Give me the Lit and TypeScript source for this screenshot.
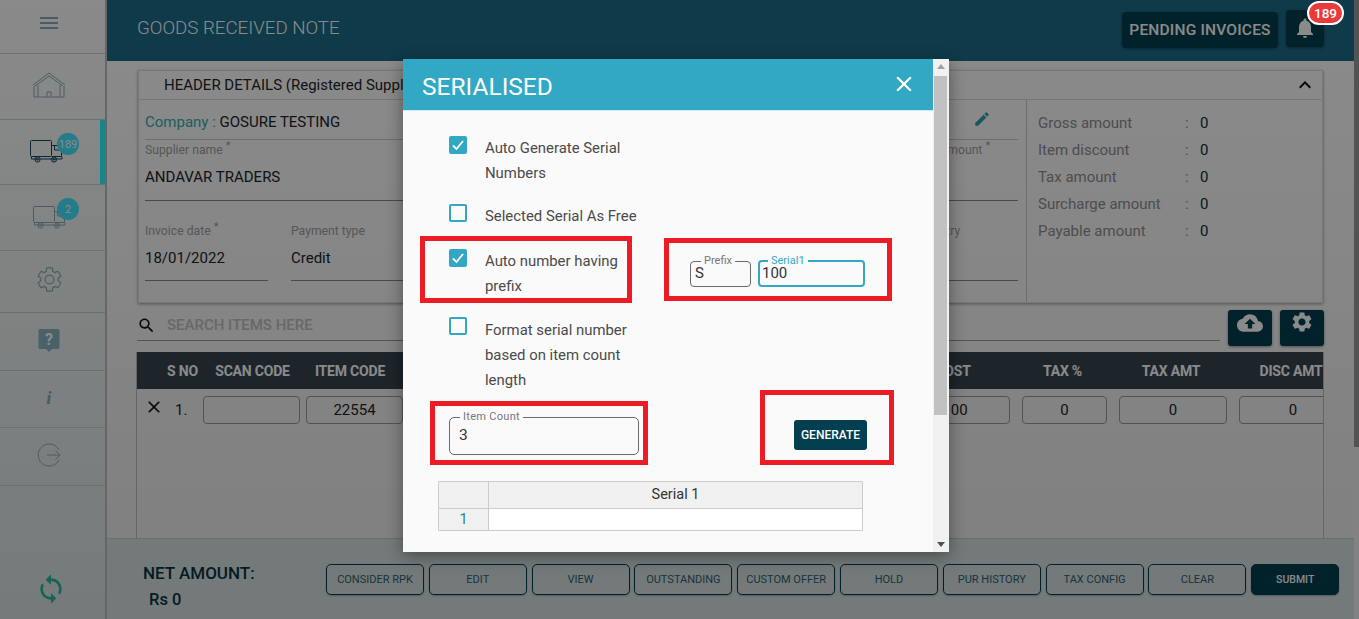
import { LitElement, html, css } from "lit";
import { customElement } from "lit/decorators.js";

const P = {
  menu: "M3 18h18v-2H3v2zm0-5h18v-2H3v2zm0-7v2h18V6H3z",
  search: "M15.5 14h-.79l-.28-.27C15.41 12.59 16 11.11 16 9.5 16 5.91 13.09 3 9.5 3S3 5.91 3 9.5 5.91 16 9.5 16c1.61 0 3.09-.59 4.23-1.57l.27.28v.79l5 4.99L20.49 19l-4.99-5zm-6 0C7.01 14 5 11.99 5 9.5S7.01 5 9.5 5 14 7.01 14 9.5 11.99 14 9.5 14z",
  close: "M19 6.41L17.59 5 12 10.59 6.41 5 5 6.41 10.59 12 5 17.59 6.41 19 12 13.41 17.59 19 19 17.59 13.41 12z",
  up: "M12 8l-6 6 1.41 1.41L12 10.83l4.59 4.58L18 14z",
  edit: "M3 17.25V21h3.75L17.81 9.94l-3.75-3.75L3 17.25zM20.71 7.04c.39-.39.39-1.02 0-1.41l-2.34-2.34c-.39-.39-1.02-.39-1.41 0l-1.83 1.83 3.75 3.75 1.83-1.83z",
  bell: "M12 22c1.1 0 2-.9 2-2h-4c0 1.1.89 2 2 2zm6-6v-5c0-3.07-1.64-5.64-4.5-6.32V4c0-.83-.67-1.5-1.5-1.5s-1.5.67-1.5 1.5v.68C7.63 5.36 6 7.92 6 11v5l-2 2v1h16v-1l-2-2z",
  cloud: "M19.35 10.04C18.67 6.59 15.64 4 12 4 9.11 4 6.6 5.64 5.35 8.04 2.34 8.36 0 10.91 0 14c0 3.31 2.69 6 6 6h13c2.76 0 5-2.24 5-5 0-2.64-2.05-4.78-4.65-4.96zM14 13v4h-4v-4H7l5-5 5 5h-3z",
  gear: "M19.14 12.94c.04-.3.06-.61.06-.94 0-.32-.02-.64-.07-.94l2.03-1.58c.18-.14.23-.41.12-.61l-1.92-3.32c-.12-.22-.37-.29-.59-.22l-2.39.96c-.5-.38-1.03-.7-1.62-.94l-.36-2.54c-.04-.24-.24-.41-.48-.41h-3.84c-.24 0-.43.17-.47.41l-.36 2.54c-.59.24-1.13.57-1.62.94l-2.39-.96c-.22-.08-.47 0-.59.22L2.74 8.87c-.12.21-.08.47.12.61l2.03 1.58c-.05.3-.09.63-.09.94s.02.64.07.94l-2.03 1.58c-.18.14-.23.41-.12.61l1.92 3.32c.12.22.37.29.59.22l2.39-.96c.5.38 1.03.7 1.62.94l.36 2.54c.05.24.24.41.48.41h3.84c.24 0 .44-.17.47-.41l.36-2.54c.59-.24 1.13-.56 1.62-.94l2.39.96c.22.08.47 0 .59-.22l1.92-3.32c.12-.22.07-.47-.12-.61l-2.01-1.58zM12 15.6c-1.98 0-3.6-1.62-3.6-3.6s1.62-3.6 3.6-3.6 3.6 1.62 3.6 3.6-1.62 3.6-3.6 3.6z",
  sync: "M12 4V1L8 5l4 4V6c3.31 0 6 2.69 6 6 0 1.01-.25 1.97-.7 2.8l1.46 1.46C19.54 15.03 20 13.57 20 12c0-4.42-3.58-8-8-8zm0 14c-3.31 0-6-2.69-6-6 0-1.01.25-1.97.7-2.8L5.24 7.74C4.46 8.97 4 10.43 4 12c0 4.42 3.58 8 8 8v3l4-4-4-4v3z",
};
const icon = (d: string, size: number, color: string) => html`<svg width=${size} height=${size} viewBox="0 0 24 24" fill=${color}><path d=${d}></path></svg>`;

const GREY = "#8aabb5";
const truck = (color: string) => html`<svg width="33" height="23" viewBox="0 0 33 23" fill="none" stroke=${color} stroke-width="1">
  <rect x=".5" y=".5" width="21" height="16" rx="1"></rect>
  <path d="M22 5.500h5l4.500 4.500v6.500H22"></path><path d="M24.500 6v4h7"></path>
  <path d="M1.500 17v2h30.500v-2"></path>
  <circle cx="7.500" cy="19.500" r="2.600"></circle><circle cx="7.500" cy="19.500" r=".8"></circle>
  <circle cx="24" cy="19.500" r="2.600"></circle><circle cx="24" cy="19.500" r=".8"></circle>
</svg>`;

const BTN = ["CONSIDER RPK", "EDIT", "VIEW", "OUTSTANDING", "CUSTOM OFFER", "HOLD", "PUR HISTORY", "TAX CONFIG", "CLEAR"];
const SUM = ["Gross amount", "Item discount", "Tax amount", "Surcharge amount", "Payable amount"];

@customElement("app-root")
export class AppRoot extends LitElement {
  static styles = css`
    :host { display: block; width: 1359px; height: 619px; overflow: hidden; position: relative; font-family: Roboto, "Liberation Sans", sans-serif; color: #212529; background: #f4f4f4; }
    * { box-sizing: border-box; }
    .app { display: flex; height: 619px; }
    .side { width: 107px; flex: none; border-right: 2px solid #bdbdbd; display: flex; flex-direction: column; background: linear-gradient(#fff, #d8e2e2); }
    .s { border-bottom: 1px solid #ccd0d0; display: flex; align-items: center; justify-content: center; position: relative; padding: 0 7px 4px 0; }
    .s svg { display: block; }
    .s1 { height: 54px; padding-bottom: 8px; }
    .s2 { height: 66px; }
    .s3 { height: 65px; padding-right: 13px; padding-bottom: 2px; }
    .s4 { height: 66px; padding-bottom: 0; padding-top: 0; }
    .s5 { height: 62px; }
    .s6 { height: 58px; }
    .s7 { height: 57px; }
    .s8 { height: 58px; }
    .active::after { content: ""; position: absolute; right: 0; top: 0; bottom: 0; width: 5px; background: #2bf5ff; }
    .badge { position: absolute; left: 57px; top: 13px; width: 22px; height: 22px; border-radius: 50%; background: #43e4ff; color: #fff; font-size: 11px; display: flex; align-items: center; justify-content: center; }
    .sync { flex: 1; display: flex; align-items: flex-end; justify-content: center; padding: 0 3px 14px 0; }
    .main { flex: 1; min-width: 0; display: flex; flex-direction: column; }
    .top { height: 61px; flex: none; background: #1a6c88; display: flex; align-items: center; padding: 0 30px; color: #fff; }
    .title { font-size: 18.700px; font-weight: 300; flex: 1; margin-top: -5px; }
    .pend { height: 36px; width: 156px; margin-right: 8px; margin-top: -2px; border-radius: 4px; background: #043f50; display: flex; align-items: center; justify-content: center; font-size: 15.5px; font-weight: 500; letter-spacing: .2px; box-shadow: 0 1px 3px #0005; }
    .bell { width: 38px; height: 37px; margin-top: -5px; border-radius: 4px; background: #043f50; display: flex; align-items: center; justify-content: center; box-shadow: 0 1px 3px #0005; }
    .bellcount { position: absolute; left: 1307px; top: 1px; width: 37px; height: 24px; border-radius: 12px; background: #ea3a3a; border: 2px solid #fff; color: #fff; font-size: 13.5px; font-weight: 500; display: flex; align-items: center; justify-content: center; }
    .content { flex: 1; min-height: 0; padding: 9px 30px 0; display: flex; flex-direction: column; background: linear-gradient(#fff, #eee); }
    .card { width: 1185px; margin-left: 1px; flex: none; height: 233px; box-shadow: 0 1px 3px #0006; border: 1px solid #ddd; display: flex; flex-direction: column; }
    .chead { height: 29px; flex: none; display: flex; align-items: center; justify-content: space-between; padding: 0 5px 0 25px; font-size: 15px; border-bottom: 1px solid #ddd; }
    .cbody { flex: 1; display: flex; }
    .cleft { width: 888px; border-right: 1px solid #c8cccc; padding: 0 8px 0 6px; }
    .company { height: 40px; border-bottom: 1px solid #ccc; display: flex; justify-content: space-between; align-items: center; font-size: 15px; padding: 4px 27px 0 0; }
    .company svg { margin-top: -6px; }
    .company b { font-weight: 400; color: #34b0b0; }
    .sup { height: 61px; border-bottom: 1.500px solid #8a8a8a; display: flex; justify-content: space-between; padding-top: 3px; }
    .lab { font-size: 12.200px; color: #a0a0a0; line-height: 14px; }
    .lab sup { font-size: 11px; line-height: 0; }
    .val { font-size: 15px; margin-top: 11px; line-height: 18px; }
    .row3 { display: flex; padding-top: 23px; }
    .f3 { height: 57px; border-bottom: 1.500px solid #8a8a8a; }
    .w1 { width: 123px; margin-right: 23px; }
    .w2 { width: 115px; }
    .w3 { width: 100px; margin-left: auto; }
    .w4 { width: 119px; }
    .cright { flex: 1; padding: 14px 0 0 11px; display: grid; grid-template-columns: 147px 15px 1fr; grid-auto-rows: 27px; font-size: 15px; color: #8f8f8f; align-content: start; line-height: 18px; }
    .cright i { font-style: normal; color: #0d2d3a; }
    .search { height: 36px; flex: none; margin-top: 7px; display: flex; justify-content: space-between; }
    .sbox { flex: 1; height: 31px; border-bottom: 1.500px solid #9a9a9a; display: flex; align-items: center; gap: 11px; font-size: 15px; font-weight: 500; color: #c0c0c0; }
    .tool { width: 44px; height: 36px; border-radius: 3px; background: #043f50; display: flex; justify-content: center; margin-left: 8px; box-shadow: 0 1px 3px #0006; }
    .tools { display: flex; }
    .table { flex: 1; min-height: 0; margin: 6px 0 0 -1px; width: 1188px; border-left: 1px solid #bbb; border-right: 1px solid #bbb; overflow: hidden; }
    .grid { display: grid; grid-template-columns: 30px 36px 103px 594px 122px 97px 120px 120px; width: 1222px; align-items: center; }
    .thead { height: 37px; background: #364550; color: #fff; font-size: 14px; font-weight: 700; letter-spacing: -.2px; text-align: center; }
    .thead span { padding-right: 16px; }
    .thead .l { text-align: left; padding: 0; }
    .thead .sc { padding-left: 2px; padding-right: 6px; }
    .thead .n { padding: 0 9px 0 0; width: 97px; }
    .trow { height: 42px; font-size: 15px; }
    .x { display: flex; padding-left: 7px; margin-top: -6px; }
    .no { padding-left: 8px; }
    .cell { height: 28px; margin-right: 12px; border: 1px solid #999; border-radius: 4px; text-align: center; line-height: 26px; }
    .c6 { margin-right: 6px; }
    .item { width: 97px; }
    .bottom { height: 81px; flex: none; background: #d7e2e2; border-top: 1px solid #c8cccc; display: flex; padding: 25px 0 0 36px; }
    .net { width: 183px; font-size: 17px; font-weight: 500; color: #063240; margin-top: -4px; line-height: 27px; }
    .net div + div { margin-left: 6px; font-size: 16.500px; line-height: 26px; }
    .btns { display: flex; gap: 4.800px; align-items: flex-start; }
    .b { width: 98px; height: 31px; border: 1.500px solid #043f50; border-radius: 5px; font-size: 11px; color: #2f6070; display: flex; align-items: center; justify-content: center; box-shadow: 0 1px 2px #0004; }
    .b.sub { width: 88px; background: #043f50; color: #fff; font-size: 10.500px; font-weight: 500; }
    .pagebar { width: 5px; flex: none; background: linear-gradient(#9a9a9a 447px, #f0f0f0 447px); }
    .dim { position: absolute; inset: 0; background: rgba(0,0,0,.46); }

    .modal { position: absolute; left: 403px; top: 59px; width: 546px; height: 493px; background: #fafafa; display: flex; box-shadow: 0 4px 16px #0006; }
    .mleft { flex: 1; min-width: 0; display: flex; flex-direction: column; }
    .mhead { height: 52px; background: #32a8c4; color: #fff; font-size: 24.500px; padding: 0 16px 0 19px; display: flex; justify-content: space-between; align-items: center; border-bottom: 1px solid #cfe9ef; }
    .mhead span { margin-top: 4px; }
    .mhead svg { margin-top: -2px; }
    .mbody { padding: 24px 0 0 46px; flex: 1; position: relative; }
    .chk { display: flex; width: 190px; gap: 18px; font-size: 14.900px; line-height: 25px; color: #4a4a4a; }
    .chk > span { flex: 1; padding-top: 1px; }
    .box { width: 18px; height: 18px; flex: none; border: 2px solid #32a8c4; border-radius: 2px; margin-top: 1px; display: block; }
    .box.on { background: #32a8c4; border-width: 0; }
    .c2 { margin-top: 17px; }
    .c3 { margin-top: 19px; }
    .c4 { margin-top: 18px; }
    .c4 .box { margin-top: 0; }
    .lower { display: flex; margin-top: 20px; }
    .pair { position: absolute; left: 287px; top: 146px; display: flex; gap: 7px; }
    .fs { border: 1px solid #6a6a6a; border-radius: 4px; height: 30px; margin: 0; padding: 1px 4px 0; font-size: 15px; line-height: 15px; color: #333; }
    .fs legend { font-size: 11px; color: #777; padding: 0 3px; line-height: 8px; margin-left: 6px; height: 8px; }
    .fs.act { border: 2px solid #32a8c4; padding-left: 2px; }
    .fs.act legend { color: #32a8c4; }
    .pw { width: 61px; }
    .sw { width: 107px; }
    .count { width: 190px; height: 42px; font-size: 15.500px; padding: 0 0 0 9px; line-height: 28px; border-radius: 5px; }
    .count legend { margin-left: 1px; letter-spacing: .3px; }
    .gen { margin: 7px 0 0 155px; width: 73px; height: 30px; border-radius: 3px; background: #043f4f; color: #fff; font-size: 12px; font-weight: 500; display: flex; align-items: center; justify-content: center; }
    .hot { margin: 26px 0 0 -11px; width: 425px; display: grid; grid-template-columns: 50px 1fr; border: 1px solid #ccc; font-size: 14.500px; border-radius: 1px; }
    .hot div { height: 26px; background: #f0f0f0; border-right: 1px solid #ccc; text-align: center; line-height: 25px; color: #333; }
    .hot div:nth-child(2) { border-right: 0; }
    .hot .r { border-top: 1px solid #ccc; height: 22px; line-height: 21px; color: #2a7ea8; }
    .hot .w { border-top: 1px solid #ccc; height: 22px; background: #fff; border-right: 0; }
    .msb { width: 16px; flex: none; background: #f1f1f1; display: flex; flex-direction: column; align-items: center; justify-content: space-between; padding: 5px 0; }
    .msb svg { display: block; }
    .thumb { position: absolute; left: 531px; top: 17px; width: 13px; height: 339px; background: #c1c1c1; }
    .red { position: absolute; border: 5px solid #ed1c24; pointer-events: none; }
    .r1 { left: 17px; top: 177px; width: 212px; height: 67px; }
    .r2 { left: 261px; top: 179px; width: 228px; height: 63px; }
    .r3 { left: 27px; top: 342px; width: 218px; height: 64px; }
    .r4 { left: 357px; top: 331px; width: 134px; height: 75px; }
  `;

  render() {
    const check = html`<svg class="box on" viewBox="0 0 18 18"><path d="M4 9.500l3.500 3.500 6.500-8" fill="none" stroke="#fff" stroke-width="1.800"></path></svg>`;
    return html`
      <div class="app">
        <nav class="side">
          <div class="s s1">${icon(P.menu, 24, GREY)}</div>
          <div class="s s2">
            <svg width="34" height="26" viewBox="0 0 34 26" fill="none" stroke=${GREY} stroke-width="1"><path d="M1 13L17 1l16 12"></path><path d="M3 14L17 4l14 10"></path><path d="M2 14v11h30V14M6 25V13M28 25V13M15 25v-5h4v5"></path></svg>
          </div>
          <div class="s s3 active">${truck("#0d4a5e")}<span class="badge">189</span></div>
          <div class="s s4">${truck(GREY)}<span class="badge">2</span></div>
          <div class="s s5">
            <svg width="29" height="29" viewBox="0 0 24 24" fill="none" stroke=${GREY} stroke-width="1"><path d="M19.140 12.940c.04-.3.06-.61.06-.94 0-.32-.02-.64-.07-.94l2.030-1.580c.18-.14.23-.41.12-.61l-1.920-3.320c-.12-.22-.37-.29-.59-.22l-2.390.96c-.5-.38-1.030-.7-1.620-.94l-.36-2.540c-.04-.24-.24-.41-.48-.41h-3.840c-.24 0-.43.17-.47.41l-.36 2.540c-.59.24-1.130.57-1.620.94l-2.390-.96c-.22-.08-.47 0-.59.22L2.740 8.870c-.12.21-.08.47.12.61l2.030 1.580c-.05.3-.09.63-.09.94s.02.64.07.94l-2.030 1.580c-.18.14-.23.41-.12.61l1.920 3.320c.12.22.37.29.59.22l2.390-.96c.5.38 1.030.7 1.620.94l.36 2.54c.05.24.24.41.48.41h3.840c.24 0 .44-.17.47-.41l.36-2.54c.59-.24 1.130-.56 1.620-.94l2.390.96c.22.08.47 0 .59-.22l1.920-3.320c.12-.22.07-.47-.12-.61l-2.010-1.580z"></path><circle cx="12" cy="12" r="3.600"></circle></svg>
          </div>
          <div class="s s6">
            <svg width="22" height="24" viewBox="0 0 22 24"><path d="M2 1h18a1.500 1.500 0 0 1 1.500 1.500v17a1.500 1.500 0 0 1-1.500 1.500h-6l-3 3-3-3H2a1.500 1.500 0 0 1-1.500-1.500v-17A1.500 1.500 0 0 1 2 1z" fill="#88b4c2"></path><text x="11" y="17" text-anchor="middle" font-size="16" font-weight="700" fill="#fff" font-family="Roboto">?</text></svg>
          </div>
          <div class="s s7"><svg width="14" height="20" viewBox="0 0 14 20"><text x="7" y="17" text-anchor="middle" font-size="19" font-weight="700" font-style="italic" font-family="Liberation Serif" fill=${GREY}>i</text></svg></div>
          <div class="s s8">
            <svg width="24" height="24" viewBox="0 0 24 24" fill="none" stroke=${GREY} stroke-width="1"><path d="M22 7a11 11 0 1 0 0 10"></path><path d="M10 12h13M18.500 7.500L23 12l-4.500 4.500"></path></svg>
          </div>
          <div class="sync">${icon(P.sync, 32, "#2fb89c")}</div>
        </nav>
        <div class="main">
          <header class="top">
            <div class="title">GOODS RECEIVED NOTE</div>
            <div class="pend">PENDING INVOICES</div>
            <div class="bell">${icon(P.bell, 24, "#fff")}</div>
          </header>
          <div class="content">
            <section class="card">
              <div class="chead"><span>HEADER DETAILS (Registered Supplier)</span>${icon(P.up, 24, "#111")}</div>
              <div class="cbody">
                <div class="cleft">
                  <div class="company"><span><b>Company :</b> GOSURE TESTING</span>${icon(P.edit, 18, "#2c9fb8")}</div>
                  <div class="sup">
                    <div><div class="lab">Supplier name <sup>*</sup></div><div class="val">ANDAVAR TRADERS</div></div>
                    <div class="w4"><div class="lab">Invoice amount <sup>*</sup></div></div>
                  </div>
                  <div class="row3">
                    <div class="f3 w1"><div class="lab">Invoice date <sup>*</sup></div><div class="val">18/01/2022</div></div>
                    <div class="f3 w2"><div class="lab">Payment type</div><div class="val">Credit</div></div>
                    <div class="f3 w3"><div class="lab">Country</div></div>
                  </div>
                </div>
                <div class="cright">
                  ${SUM.map((s) => html`<span>${s}</span><span>:</span><i>0</i>`)}
                </div>
              </div>
            </section>
            <div class="search">
              <div class="sbox">${icon(P.search, 19, "#111")}<span>SEARCH ITEMS HERE</span></div>
              <div class="tools">
                <div class="tool">${icon(P.cloud, 26, "#fff")}</div>
                <div class="tool">${icon(P.gear, 24, "#fff")}</div>
              </div>
            </div>
            <div class="table">
              <div class="grid thead">
                <span></span><span class="l">S NO</span><span class="sc">SCAN CODE</span><span class="n">ITEM CODE</span><span>COST</span><span>TAX %</span><span>TAX AMT</span><span>DISC AMT</span>
              </div>
              <div class="grid trow">
                <div class="x">${icon(P.close, 20, "#111")}</div><span class="no">1.</span>
                <div class="cell c6"></div><div class="cell item">22554</div>
                <div class="cell">100</div><div class="cell">0</div><div class="cell">0</div><div class="cell">0</div>
              </div>
            </div>
          </div>
          <footer class="bottom">
            <div class="net"><div>NET AMOUNT:</div><div>Rs 0</div></div>
            <div class="btns">
              ${BTN.map((b) => html`<div class="b">${b}</div>`)}
              <div class="b sub">SUBMIT</div>
            </div>
          </footer>
        </div>
        <div class="pagebar"></div>
      </div>
      <div class="dim"></div>
      <span class="bellcount">189</span>
      <div class="modal">
        <div class="mleft">
          <div class="mhead"><span>SERIALISED</span>${icon(P.close, 26, "#fff")}</div>
          <div class="mbody">
            <label class="chk">${check}<span>Auto Generate Serial Numbers</span></label>
            <label class="chk c2"><i class="box"></i><span>Selected Serial As Free</span></label>
            <label class="chk c3">${check}<span>Auto number having prefix</span></label>
            <label class="chk c4"><i class="box"></i><span>Format serial number based on item count length</span></label>
            <div class="pair">
              <fieldset class="fs pw"><legend>Prefix</legend>S</fieldset>
              <fieldset class="fs act sw"><legend>Serial1</legend>100</fieldset>
            </div>
            <div class="lower">
              <fieldset class="fs count"><legend>Item Count</legend>3</fieldset>
              <div class="gen">GENERATE</div>
            </div>
            <div class="hot"><div></div><div>Serial 1</div><div class="r">1</div><div class="w"></div></div>
          </div>
        </div>
        <div class="msb">
          <svg width="8" height="5"><path d="M0 5L4 0l4 5z" fill="#a0a0a0"></path></svg>
          <svg width="8" height="5"><path d="M0 0l4 5 4-5z" fill="#505050"></path></svg>
        </div>
        <div class="thumb"></div>
        <div class="red r1"></div><div class="red r2"></div><div class="red r3"></div><div class="red r4"></div>
      </div>
    `;
  }
}
